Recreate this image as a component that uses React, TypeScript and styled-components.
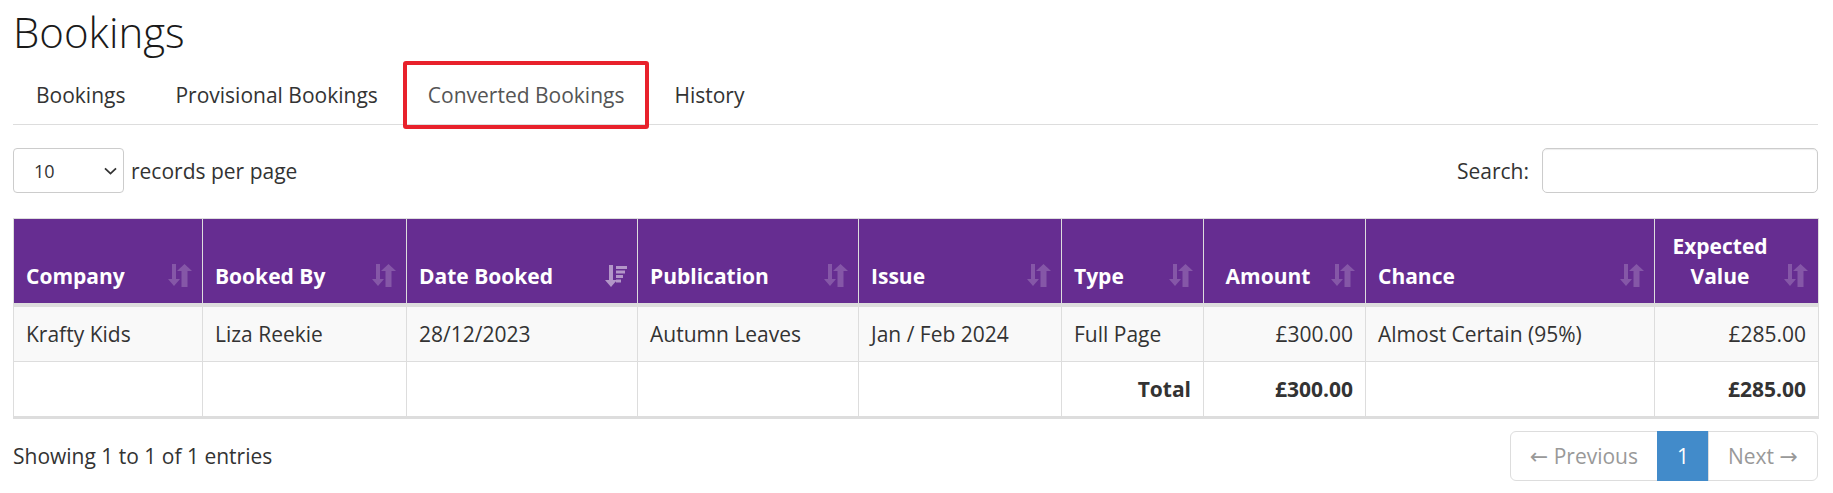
import * as React from 'react'
import styled, { createGlobalStyle } from 'styled-components'

const GlobalStyle = createGlobalStyle`
  * {
    box-sizing: border-box;
  }
  body {
    margin: 0;
    background: #fff;
    color: #333;
    font-family: 'Open Sans', 'Liberation Sans', sans-serif;
    font-size: 21px;
    line-height: 30px;
  }
`

const Page = styled.div`
  padding: 0 15px 0 13px;
`

const Title = styled.h1`
  margin: 9px 0 10px;
  font-size: 42px;
  font-weight: 300;
  line-height: 46px;
  color: #1a1a1a;
`

const Tabs = styled.ul`
  display: flex;
  list-style: none;
  margin: 0;
  padding: 0;
  border-bottom: 1px solid #ddd;
`

const TabItem = styled.li`
  margin-right: 4px;
`

const TabLink = styled.a<{ $active?: boolean; $marked?: boolean }>`
  position: relative;
  display: block;
  padding: 15px 23px 14px;
  line-height: 30px;
  color: ${(p) => (p.$active ? '#555' : '#333')};
  text-decoration: none;
  cursor: pointer;

  /* red highlight drawn over the tab */
  ${(p) =>
    p.$marked &&
    `&::after {
      content: '';
      position: absolute;
      top: -4px;
      bottom: -5px;
      left: -2px;
      right: -2px;
      border: 4px solid #e8212b;
      border-radius: 3px;
    }`}
`

const Controls = styled.div`
  display: flex;
  justify-content: space-between;
  align-items: center;
  margin-top: 23px;
`

const LengthLabel = styled.label`
  display: flex;
  align-items: center;
  gap: 7px;
`

const SelectBox = styled.div`
  display: flex;
  align-items: center;
  width: 111px;
  height: 45px;
  padding: 0 6px 0 20px;
  border: 1px solid #ccc;
  border-radius: 4px;
  background: #fff;
`

const Select = styled.select`
  flex: 1;
  min-width: 0;
  appearance: none;
  border: none;
  outline: none;
  background: transparent;
  padding: 0;
  font-family: inherit;
  font-size: 18px;
  color: #333;
`

const SearchLabel = styled.label`
  display: flex;
  align-items: center;
  gap: 13px;
`

const SearchInput = styled.input`
  width: 276px;
  height: 45px;
  border: 1px solid #ccc;
  border-radius: 5px;
  box-shadow: inset 0 1px 1px rgba(0, 0, 0, 0.075);
  font: inherit;
  padding: 0 12px;
`

const Table = styled.table`
  width: 100%;
  margin-top: 25px;
  table-layout: fixed;
  border-collapse: collapse;
  border: 1px solid #ddd;
  border-bottom-width: 3px;
`

const Col = styled.col<{ $w: number }>`
  width: ${(p) => p.$w}px;
`

const Th = styled.th`
  padding: 12px;
  background: #662d91;
  color: #fff;
  font-weight: 700;
  text-align: left;
  vertical-align: bottom;
  border: 1px solid #ddd;
  border-bottom-width: 4px;
`

const ThInner = styled.div`
  display: flex;
  align-items: flex-end;
  gap: 11px;
`

const ThLabel = styled.span<{ $align: 'left' | 'center' }>`
  flex: 1;
  text-align: ${(p) => p.$align};
`

const SortIcon = styled.svg<{ $active?: boolean }>`
  flex: none;
  margin: 0 -2px 4px 0;
  fill: #fff;
  opacity: ${(p) => (p.$active ? 0.5 : 0.2)};
`

const Row = styled.tr<{ $striped?: boolean }>`
  background: ${(p) => (p.$striped ? '#f9f9f9' : '#fff')};
`

const Td = styled.td<{ $align?: 'left' | 'right'; $bold?: boolean }>`
  padding: 12px;
  border: 1px solid #ddd;
  vertical-align: top;
  text-align: ${(p) => p.$align || 'left'};
  font-weight: ${(p) => (p.$bold ? 700 : 400)};
  white-space: nowrap;
`

const Footer = styled.div`
  display: flex;
  justify-content: space-between;
  align-items: center;
  margin-top: 12px;
`

const Pager = styled.ul`
  display: flex;
  list-style: none;
  margin: 0;
  padding: 0;
`

const PageLink = styled.a<{ $active?: boolean; $disabled?: boolean; $edge?: 'first' | 'last' }>`
  display: block;
  margin-left: -1px;
  padding: 9px 19px;
  line-height: 30px;
  text-decoration: none;
  border: 1px solid ${(p) => (p.$active ? '#428bca' : '#ddd')};
  background: ${(p) => (p.$active ? '#428bca' : '#fff')};
  color: ${(p) => (p.$active ? '#fff' : p.$disabled ? '#999' : '#428bca')};
  border-radius: ${(p) =>
    p.$edge === 'first' ? '6px 0 0 6px' : p.$edge === 'last' ? '0 6px 6px 0' : '0'};
`

const Arrow = styled.span`
  font-family: 'DejaVu Sans', sans-serif;
  font-size: 22px;
  line-height: 1;
`

const Chevron = () => (
  <svg width='13' height='8' viewBox='0 0 13 8'>
    <path d='M1 1.3 L6.5 6.6 L12 1.3' fill='none' stroke='#333' strokeWidth='1.8' />
  </svg>
)

const SortBoth = () => (
  <SortIcon width='24' height='23' viewBox='0 0 24 23'>
    <rect x='4' y='0' width='4' height='15' />
    <polygon points='0,15 12,15 6,22' />
    <polygon points='9,7 24,7 16.5,0' />
    <rect x='13.5' y='7' width='6' height='16' />
  </SortIcon>
)

const SortDesc = () => (
  <SortIcon $active width='22' height='22' viewBox='0 0 22 22'>
    <rect x='4' y='0' width='4' height='15' />
    <polygon points='0,15 12,15 6,22' />
    <rect x='11' y='1' width='11' height='3' />
    <rect x='11' y='5.5' width='9' height='3' />
    <rect x='11' y='10' width='7' height='3' />
    <rect x='11' y='14.5' width='5' height='3' />
  </SortIcon>
)

type Column = {
  label: string
  width: number
  head: 'left' | 'center'
  cell: 'left' | 'right'
  sorted?: boolean
}

const columns: Column[] = [
  { label: 'Company', width: 189, head: 'left', cell: 'left' },
  { label: 'Booked By', width: 204, head: 'left', cell: 'left' },
  { label: 'Date Booked', width: 231, head: 'left', cell: 'left', sorted: true },
  { label: 'Publication', width: 221, head: 'left', cell: 'left' },
  { label: 'Issue', width: 203, head: 'left', cell: 'left' },
  { label: 'Type', width: 142, head: 'left', cell: 'left' },
  { label: 'Amount', width: 162, head: 'center', cell: 'right' },
  { label: 'Chance', width: 289, head: 'left', cell: 'left' },
  { label: 'Expected Value', width: 164, head: 'center', cell: 'right' }
]

const bookings = [
  [
    'Krafty Kids',
    'Liza Reekie',
    '28/12/2023',
    'Autumn Leaves',
    'Jan / Feb 2024',
    'Full Page',
    '£300.00',
    'Almost Certain (95%)',
    '£285.00'
  ]
]

const totals = ['', '', '', '', '', 'Total', '£300.00', '', '£285.00']

const tabs = ['Bookings', 'Provisional Bookings', 'Converted Bookings', 'History']

export default function App() {
  return (
    <Page>
      <GlobalStyle />
      <Title>Bookings</Title>
      <Tabs>
        {tabs.map((t) => (
          <TabItem key={t}>
            <TabLink
              $active={t === 'Converted Bookings'}
              $marked={t === 'Converted Bookings'}
            >
              {t}
            </TabLink>
          </TabItem>
        ))}
      </Tabs>

      <Controls>
        <LengthLabel>
          <SelectBox>
            <Select defaultValue='10'>
              <option value='10'>10</option>
              <option value='25'>25</option>
              <option value='50'>50</option>
              <option value='100'>100</option>
            </Select>
            <Chevron />
          </SelectBox>
          records per page
        </LengthLabel>
        <SearchLabel>
          Search:
          <SearchInput type='search' />
        </SearchLabel>
      </Controls>

      <Table>
        <colgroup>
          {columns.map((c) => (
            <Col key={c.label} $w={c.width} />
          ))}
        </colgroup>
        <thead>
          <tr>
            {columns.map((c) => (
              <Th key={c.label}>
                <ThInner>
                  <ThLabel $align={c.head}>{c.label}</ThLabel>
                  {c.sorted ? <SortDesc /> : <SortBoth />}
                </ThInner>
              </Th>
            ))}
          </tr>
        </thead>
        <tbody>
          {bookings.map((row, i) => (
            <Row key={i} $striped={i % 2 === 0}>
              {row.map((v, j) => (
                <Td key={j} $align={columns[j].cell}>
                  {v}
                </Td>
              ))}
            </Row>
          ))}
          <Row>
            {totals.map((v, j) => (
              <Td key={j} $align='right' $bold>
                {v}
              </Td>
            ))}
          </Row>
        </tbody>
      </Table>

      <Footer>
        <div>Showing 1 to 1 of 1 entries</div>
        <Pager>
          <li>
            <PageLink $disabled $edge='first'>
              <Arrow>←</Arrow> Previous
            </PageLink>
          </li>
          <li>
            <PageLink $active>1</PageLink>
          </li>
          <li>
            <PageLink $disabled $edge='last'>
              Next <Arrow>→</Arrow>
            </PageLink>
          </li>
        </Pager>
      </Footer>
    </Page>
  )
}
